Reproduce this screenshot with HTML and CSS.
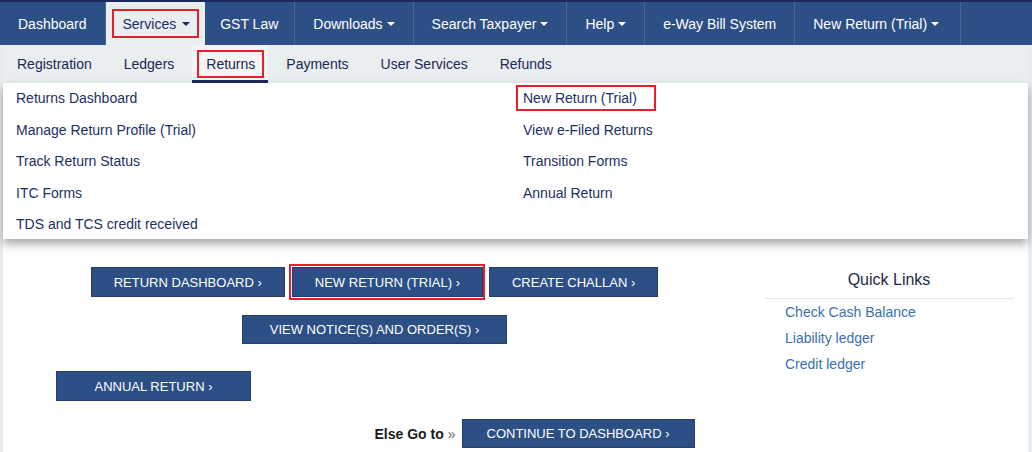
FILE: index.html
```html
<!DOCTYPE html>
<html lang="en">
<head>
    <meta charset="UTF-8">
    <meta name="viewport" content="width=device-width, initial-scale=1.0">
    <title>Goods and Services Tax - Returns</title>
    <link rel="stylesheet" href="styles.css">
</head>
<body>
    <nav class="topnav">
        <ul class="nav-menu">
            <li class="nav-item">Dashboard</li>
            <li class="nav-item active"><span class="mark">Services <span class="caret"></span></span></li>
            <li class="nav-item narrow">GST Law</li>
            <li class="nav-item">Downloads <span class="caret"></span></li>
            <li class="nav-item">Search Taxpayer <span class="caret"></span></li>
            <li class="nav-item">Help <span class="caret"></span></li>
            <li class="nav-item">e-Way Bill System</li>
            <li class="nav-item">New Return (Trial) <span class="caret"></span></li>
        </ul>
    </nav>

    <div class="page">
        <ul class="submenu">
            <li class="sub-item">Registration</li>
            <li class="sub-item">Ledgers</li>
            <li class="sub-item active"><span class="mark">Returns</span></li>
            <li class="sub-item">Payments</li>
            <li class="sub-item">User Services</li>
            <li class="sub-item">Refunds</li>
        </ul>

        <!-- open Returns menu -->
        <div class="dropdown">
            <ul class="drop-col">
                <li>Returns Dashboard</li>
                <li>Manage Return Profile (Trial)</li>
                <li>Track Return Status</li>
                <li>ITC Forms</li>
                <li>TDS and TCS credit received</li>
            </ul>
            <ul class="drop-col">
                <li><span class="mark">New Return (Trial)</span></li>
                <li>View e-Filed Returns</li>
                <li>Transition Forms</li>
                <li>Annual Return</li>
            </ul>
        </div>

        <main class="content">
            <div class="actions">
                <div class="btn-row centered row-main">
                    <button class="btn">RETURN DASHBOARD ›</button>
                    <span class="mark"><button class="btn">NEW RETURN (TRIAL) ›</button></span>
                    <button class="btn">CREATE CHALLAN ›</button>
                </div>
                <div class="btn-row centered row-notice">
                    <button class="btn btn-short">VIEW NOTICE(S) AND ORDER(S) ›</button>
                </div>
                <div class="btn-row row-annual">
                    <button class="btn btn-wide">ANNUAL RETURN ›</button>
                </div>
                <div class="btn-row row-goto">
                    <span class="goto">Else Go to</span>
                    <span class="raquo">»</span>
                    <button class="btn btn-short">CONTINUE TO DASHBOARD ›</button>
                </div>
            </div>

            <aside class="quick-links">
                <h4>Quick Links</h4>
                <ul>
                    <li><a href="#">Check Cash Balance</a></li>
                    <li><a href="#">Liability ledger</a></li>
                    <li><a href="#">Credit ledger</a></li>
                </ul>
            </aside>
        </main>
    </div>
</body>
</html>
```

FILE: styles.css
```css
* {
    margin: 0;
    padding: 0;
    box-sizing: border-box;
    font-family: 'Liberation Sans', Arial, sans-serif;
}

body {
    background-color: #e8ecef;
    height: 452px;
    overflow: hidden;
}

ul {
    list-style: none;
}

.mark {
    border: 2px solid #e6202b;
}

.caret {
    display: inline-block;
    width: 0;
    height: 0;
    margin-left: 4px;
    vertical-align: middle;
    border-top: 4px solid;
    border-left: 4px solid transparent;
    border-right: 4px solid transparent;
}

/* top navigation */
.topnav {
    background-color: #2c4f85;
    border-top: 2px solid #1b2a5b;
}

.nav-menu {
    display: flex;
    height: 43px;
}

.nav-item {
    display: flex;
    align-items: center;
    padding: 0 18px;
    color: white;
    font-size: 14px;
    border-right: 1px solid #46669a;
    white-space: nowrap;
}

.nav-item:last-child {
    padding-right: 21px;
}

.nav-item.narrow {
    padding: 0 16px 0 15px;
}

.nav-item.active {
    background-color: #e9eef1;
    color: #1c2a5c;
    padding: 0 5px 0 6px;
    border-right-color: #e9eef1;
}

.nav-item.active .mark {
    display: flex;
    align-items: center;
    height: 29px;
    padding: 0 7px 0 9px;
}

.nav-item.active .caret {
    margin-left: 6px;
}

/* page body */
.page {
    margin: 0 4px 0 3px;
    background-color: white;
    min-height: 407px;
}

.submenu {
    display: flex;
    height: 38px;
    background-color: #e9eef1;
}

.sub-item {
    display: flex;
    align-items: center;
    margin-right: 4px;
    padding: 0 14px;
    color: #1a2852;
    font-size: 14px;
}

.sub-item.active {
    background-color: #f4f4f4;
    border-bottom: 3px solid #1d2a5a;
    padding: 3px 4px 0 5px;
}

.sub-item.active .mark {
    padding: 4px 7px;
}

.dropdown {
    display: grid;
    grid-template-columns: 507px 1fr;
    padding: 0 0 0 13px;
    height: 156px;
    background-color: white;
    box-shadow: 0 5px 9px rgba(0, 0, 0, 0.35);
    position: relative;
    z-index: 2;
}

.drop-col li {
    height: 31.5px;
    line-height: 31.5px;
    color: #1c2f62;
    font-size: 14px;
}

.drop-col .mark {
    padding: 3px 17px 3px 5px;
    margin-left: -7px;
}

/* main area */
.content {
    display: flex;
    padding-top: 28px;
}

.actions {
    flex: 0 0 743px;
}

.btn-row {
    display: flex;
    align-items: center;
    gap: 4px;
}

.btn-row.centered {
    justify-content: center;
}

.btn-row .mark {
    margin: -3px 0;
}

.row-main .btn {
    padding: 0 22px;
}

.row-notice {
    margin-top: 18px;
}

.row-notice .btn {
    padding: 0 27px;
}

.row-annual {
    margin-top: 27px;
    padding-left: 53px;
}

.row-goto {
    margin-top: 18px;
    padding-left: 50%;
    gap: 0;
}

.btn {
    height: 30px;
    padding: 0 24px;
    background-color: #2c4f85;
    border: 1px solid #243f6e;
    color: white;
    font-size: 13px;
    white-space: nowrap;
    cursor: pointer;
}

.mark .btn {
    display: block;
    margin: 1px 0 1px 1px;
}

.btn-short {
    height: 29px;
}

.btn-wide {
    width: 195px;
}

.goto {
    font-size: 14px;
    font-weight: bold;
    color: #1b1b1b;
}

.raquo {
    margin: 0 6px 0 4px;
    color: #666;
    font-size: 14px;
}

.quick-links {
    flex: 0 0 250px;
    margin-left: 18px;
}

.quick-links h4 {
    font-size: 16px;
    font-weight: normal;
    line-height: 26px;
    text-align: center;
    color: #1d2a44;
    padding-bottom: 5px;
    border-bottom: 1px solid #e6e6e6;
}

.quick-links ul {
    padding-left: 21px;
}

.quick-links li {
    line-height: 26px;
    font-size: 14px;
}

.quick-links a {
    color: #3b6fae;
    text-decoration: none;
}
```
